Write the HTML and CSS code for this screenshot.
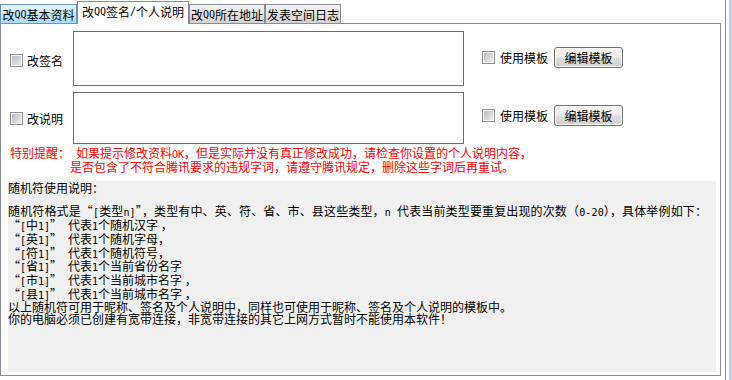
FILE: index.html
```html
<!DOCTYPE html>
<html lang="zh-CN">
<head>
<meta charset="utf-8">
<title>改QQ签名/个人说明</title>
<link rel="stylesheet" href="styles.css">
</head>
<body>
<div class="window">
  <div class="main">
    <div class="tabs">
      <div class="tab hot">改<span class="h">QQ</span>基本资料</div>
      <div class="tab active">改<span class="h">QQ</span>签名<span class="h">/</span>个人说明</div>
      <div class="tab plain">改<span class="h">QQ</span>所在地址</div>
      <div class="tab plain">发表空间日志</div>
    </div>
    <div class="panel">
      <div class="row row1">
        <label class="lbl"><span class="cb"></span>改签名</label>
        <textarea class="field"></textarea>
        <div class="tpl"><span class="cb"></span><span class="tpl-text">使用模板</span><button class="btn">编辑模板</button></div>
      </div>
      <div class="row row2">
        <label class="lbl"><span class="cb"></span>改说明</label>
        <textarea class="field"></textarea>
        <div class="tpl"><span class="cb"></span><span class="tpl-text">使用模板</span><button class="btn">编辑模板</button></div>
      </div>
      <div class="notice">
        <div class="notice-title">特别提醒：</div>
        <div class="notice-text">如果提示修改资料<span class="h">OK</span>，但是实际并没有真正修改成功，请检查你设置的个人说明内容，<br>是否包含了不符合腾讯要求的违规字词，请遵守腾讯规定，删除这些字词后再重试。</div>
      </div>
      <div class="help">
        <div class="line">随机符使用说明：</div>
        <div class="line">&nbsp;</div>
        <div class="line wide">随机符格式是“<span class="h">[</span>类型<span class="h">n]</span>”，类型有中、英、符、省、市、县这些类型，<span class="h">n </span>代表当前类型要重复出现的次数（<span class="h">0-20</span>），具体举例如下：</div>
        <div class="line"><span class="key">“<span class="h">[</span>中<span class="h">1]</span>”</span>代表<span class="h">1</span>个随机汉字 ，</div>
        <div class="line"><span class="key">“<span class="h">[</span>英<span class="h">1]</span>”</span>代表<span class="h">1</span>个随机字母，</div>
        <div class="line"><span class="key">“<span class="h">[</span>符<span class="h">1]</span>”</span>代表<span class="h">1</span>个随机符号，</div>
        <div class="line"><span class="key">“<span class="h">[</span>省<span class="h">1]</span>”</span>代表<span class="h">1</span>个当前省份名字</div>
        <div class="line"><span class="key">“<span class="h">[</span>市<span class="h">1]</span>”</span>代表<span class="h">1</span>个当前城市名字 ，</div>
        <div class="line"><span class="key">“<span class="h">[</span>县<span class="h">1]</span>”</span>代表<span class="h">1</span>个当前城市名字 ，</div>
        <div class="line">以上随机符可用于昵称、签名及个人说明中，同样也可使用于昵称、签名及个人说明的模板中。</div>
        <div class="line">你的电脑必须已创建有宽带连接，非宽带连接的其它上网方式暂时不能使用本软件！</div>
      </div>
    </div>
  </div>
  <div class="gap"></div>
  <div class="frame-line"></div>
  <div class="gap2"></div>
  <div class="frame-blue"></div>
</div>
</body>
</html>
```

FILE: styles.css
```css
html, body {
  margin: 0;
  padding: 0;
  background: #fff;
}
body {
  font: 12px "Noto Sans CJK SC", sans-serif;
  color: #000;
}
.h {
  font-family: "DejaVu Sans Mono", "Liberation Mono", monospace;
  font-size: 10px;
}
.window {
  display: flex;
  height: 380px;
}
.main {
  width: 721px;
  flex: none;
}
.gap { width: 4px; flex: none; }
.frame-line { width: 1px; flex: none; background: #8f8f8f; }
.gap2 { width: 3px; flex: none; }
.frame-blue { width: 3px; flex: none; background: #bcd3ec; }

.tabs {
  display: flex;
  align-items: flex-end;
  height: 23px;
}
.tab {
  box-sizing: border-box;
  height: 19px;
  width: 76px;
  border: 1px solid #898c95;
  border-bottom: none;
  display: flex;
  align-items: center;
  justify-content: center;
  white-space: nowrap;
  line-height: 12px;
  padding-top: 1px;
  background: linear-gradient(#f3f3f3, #d2d2d2);
}
.tab.hot {
  width: 77px;
  border-color: #6f93b8;
  background: linear-gradient(#e8f5fd, #a8daf6);
}
.tab.active {
  width: 112px;
  height: 23px;
  margin-bottom: -1px;
  padding-top: 0;
  padding-bottom: 2px;
  background: #fff;
  position: relative;
  z-index: 1;
}

.panel {
  box-sizing: border-box;
  height: 353px;
  border: 1px solid #898c95;
}
.row {
  display: flex;
  align-items: flex-start;
}
.row1 { margin-top: 7px; }
.row2 { margin-top: 6px; }
.lbl {
  box-sizing: border-box;
  width: 72px;
  padding-left: 9px;
  height: 13px;
  display: flex;
  align-items: center;
  gap: 4px;
  line-height: 13px;
  white-space: nowrap;
}
.row1 .lbl { margin-top: 23px; }
.row2 .lbl { margin-top: 20px; }
.field {
  box-sizing: border-box;
  width: 391px;
  border: 1px solid #6e6e6e;
  margin: 0;
  padding: 0;
  resize: none;
  background: #fff;
  font: inherit;
  outline: none;
}
.row1 .field { height: 55px; }
.row2 .field { height: 52px; }
.tpl {
  display: flex;
  align-items: center;
  margin-left: 18px;
  height: 21px;
}
.row1 .tpl { margin-top: 16px; }
.row2 .tpl { margin-top: 13px; }
.tpl-text {
  margin-left: 5px;
  white-space: nowrap;
}
.cb {
  box-sizing: border-box;
  flex: none;
  width: 13px;
  height: 13px;
  border: 1px solid #8e8f8f;
  background: linear-gradient(135deg, #b4b6b9, #f2f2f2);
  box-shadow: inset 0 0 0 1px #f7f7f7;
}
.btn {
  box-sizing: border-box;
  width: 69px;
  height: 21px;
  margin: 0 0 0 6px;
  padding: 0;
  border: 1px solid #707070;
  border-radius: 3px;
  background: linear-gradient(#f4f4f4 0, #ececec 48%, #dedede 52%, #d0d0d0 100%);
  box-shadow: inset 0 0 0 1px #fbfbfb;
  font: inherit;
  color: #000;
  display: flex;
  align-items: center;
  justify-content: center;
}

.notice {
  display: flex;
  margin-top: 3px;
  color: #ff0000;
  line-height: 12px;
  white-space: nowrap;
}
.notice-title {
  box-sizing: border-box;
  width: 69px;
  padding-left: 9px;
}
.notice-text {
  text-indent: 6px;
}

.help {
  box-sizing: border-box;
  margin: 8px 0 0 7px;
  width: 708px;
  height: 191px;
  padding-top: 1px;
  background: #f0f0f0;
  line-height: 11.7px;
  white-space: nowrap;
}
.wide {
  letter-spacing: 0.14px;
}
.key {
  display: inline-block;
  width: 60px;
}
```
